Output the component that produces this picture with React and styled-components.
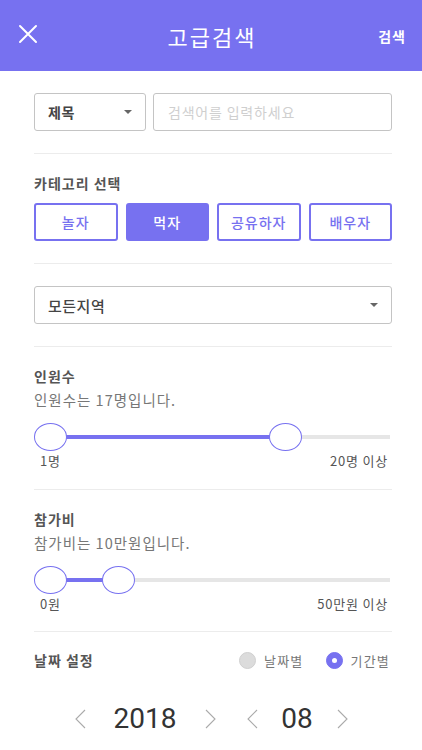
import React, { useState } from "react";
import styled, { createGlobalStyle } from "styled-components";

const PURPLE = "#7771f0";

const GlobalStyle = createGlobalStyle`
  * { box-sizing: border-box; }
  body {
    margin: 0;
    background: #fff;
    font-family: "Noto Sans CJK KR", "Noto Sans", sans-serif;
    color: #444;
  }
`;

const Page = styled.div`
  width: 422px;
  height: 750px;
  overflow: hidden;
  background: #fff;
`;

const Header = styled.header`
  height: 71px;
  background: ${PURPLE};
  display: grid;
  grid-template-columns: 80px 1fr 80px;
  align-items: center;
  color: #fff;
  padding: 0 16px 0 18px;
`;

const CloseButton = styled.button`
  background: none;
  border: none;
  padding: 0;
  width: 24px;
  height: 24px;
  display: flex;
  color: #fff;
`;

const Title = styled.h1`
  margin: 0;
  text-align: center;
  font-size: 22px;
  font-weight: 400;
  letter-spacing: 2px;
`;

const HeaderAction = styled.span`
  justify-self: end;
  font-size: 14px;
  font-weight: 700;
  letter-spacing: 1px;
`;

const Body = styled.div`
  padding: 0 30px 0 34px;
`;

const Section = styled.section`
  padding: ${(p) => p.$pad || "21px 0 22px"};
  border-bottom: ${(p) => (p.$last ? "none" : "1px solid #ececec")};
`;

const Row = styled.div`
  display: flex;
  gap: 7px;
`;

const SelectBox = styled.div`
  width: ${(p) => p.$width || "auto"};
  flex: ${(p) => (p.$grow ? 1 : "none")};
  height: 38px;
  border: 1px solid #c4c4c4;
  border-radius: 3px;
  display: flex;
  align-items: center;
  justify-content: space-between;
  padding: 0 13px 0 13px;
  font-size: ${(p) => p.$size || "14px"};
  font-weight: ${(p) => p.$weight || 700};
  letter-spacing: 0.5px;
  color: #444;
`;

const Caret = styled.span`
  width: 0;
  height: 0;
  border-left: 4px solid transparent;
  border-right: 4px solid transparent;
  border-top: 4px solid #666;
`;

const Input = styled.div`
  flex: 1;
  height: 38px;
  border: 1px solid #c4c4c4;
  border-radius: 3px;
  display: flex;
  align-items: center;
  padding: 0 14px;
  font-size: 14px;
  letter-spacing: 0.8px;
  color: #cfcfcf;
`;

const Label = styled.h2`
  margin: 0;
  font-size: 14px;
  font-weight: 700;
  color: #555;
  line-height: 20px;
  letter-spacing: 1px;
`;

const Sub = styled.p`
  margin: 4px 0 0;
  font-size: 14.5px;
  color: #777;
  line-height: 20px;
  letter-spacing: 1px;
`;

const CategoryGrid = styled.div`
  display: grid;
  grid-template-columns: repeat(4, 1fr);
  gap: 8px;
  margin-top: 10px;
`;

const CategoryButton = styled.button`
  height: 38px;
  border: 2px solid ${PURPLE};
  border-radius: 3px;
  background: ${(p) => (p.$active ? PURPLE : "#fff")};
  color: ${(p) => (p.$active ? "#fff" : PURPLE)};
  font-family: inherit;
  font-size: 14px;
  font-weight: 500;
  letter-spacing: 1px;
`;

const SliderWrap = styled.div`
  position: relative;
  height: 28px;
  margin: 13px 2px 0 0;
`;

const Track = styled.div`
  position: absolute;
  left: 0;
  right: 0;
  top: 12px;
  height: 4px;
  background: #e6e6e6;
`;

const Fill = styled.div`
  position: absolute;
  top: 12px;
  height: 4px;
  background: ${PURPLE};
`;

const Thumb = styled.div`
  position: absolute;
  top: 0;
  width: 33px;
  height: 28px;
  margin-left: -16px;
  border-radius: 50%;
  border: 1.5px solid ${PURPLE};
  background: #fff;
`;

const Ends = styled.div`
  display: flex;
  justify-content: space-between;
  font-size: 13px;
  color: #555;
  padding: 0 4px 0 6px;
  line-height: 20px;
  letter-spacing: 0.8px;
`;

const DateHeader = styled.div`
  display: flex;
  align-items: center;
  justify-content: space-between;
  height: 20px;
`;

const Radios = styled.div`
  display: flex;
  gap: 22px;
  margin-right: 2px;
`;

const Radio = styled.label`
  display: flex;
  align-items: center;
  gap: 8px;
  font-size: 13px;
  color: #777;
  letter-spacing: 1.2px;
`;

const Dot = styled.span`
  width: 17px;
  height: 17px;
  border-radius: 50%;
  background: ${(p) => (p.$on ? PURPLE : "#dcdcdc")};
  border: 1px solid ${(p) => (p.$on ? PURPLE : "#d0d0d0")};
  display: flex;
  align-items: center;
  justify-content: center;
  &::after {
    content: "";
    display: ${(p) => (p.$on ? "block" : "none")};
    width: 5px;
    height: 5px;
    border-radius: 50%;
    background: #fff;
  }
`;

const Stepper = styled.div`
  display: flex;
  align-items: center;
  height: 34px;
  margin-top: 32px;
  padding-left: 30px;
`;

const Value = styled.span`
  font-family: Roboto, "Noto Sans", sans-serif;
  font-size: 28px;
  line-height: 34px;
  color: #333;
  width: ${(p) => p.$w};
  text-align: center;
`;

const Chevron = styled.span`
  display: flex;
  width: 32px;
  justify-content: center;
  margin-left: ${(p) => p.$gap || "0"};
`;

const XIcon = () => (
  <svg width="20" height="20" viewBox="0 0 20 20" fill="none">
    <path d="M2 2L18 18M18 2L2 18" stroke="#fff" strokeWidth="2" strokeLinecap="round" />
  </svg>
);

const ChevronIcon = ({ dir }) => (
  <svg width="11" height="20" viewBox="0 0 11 20" fill="none">
    <path
      d={dir === "left" ? "M10 1L1 10L10 19" : "M1 1L10 10L1 19"}
      stroke="#aaa"
      strokeWidth="1.1"
    />
  </svg>
);

/* thumb centres are in px from the left of the track */
const RangeSlider = ({ from, to, startLabel, endLabel }) => (
  <>
    <SliderWrap>
      <Track />
      <Fill style={{ left: from, width: to - from }} />
      <Thumb style={{ left: from }} />
      <Thumb style={{ left: to }} />
    </SliderWrap>
    <Ends>
      <span>{startLabel}</span>
      <span>{endLabel}</span>
    </Ends>
  </>
);

const categories = ["놀자", "먹자", "공유하자", "배우자"];

export default function App() {
  const [active, setActive] = useState(1);
  return (
    <Page>
      <GlobalStyle />
      <Header>
        <CloseButton aria-label="닫기">
          <XIcon />
        </CloseButton>
        <Title>고급검색</Title>
        <HeaderAction>검색</HeaderAction>
      </Header>
      <Body>
        <Section $pad="22px 0 22px">
          <Row>
            <SelectBox $width="112px">
              제목
              <Caret />
            </SelectBox>
            <Input>검색어를 입력하세요</Input>
          </Row>
        </Section>
        <Section $pad="19px 0 22px">
          <Label>카테고리 선택</Label>
          <CategoryGrid>
            {categories.map((c, i) => (
              <CategoryButton key={c} $active={i === active} onClick={() => setActive(i)}>
                {c}
              </CategoryButton>
            ))}
          </CategoryGrid>
        </Section>
        <Section $pad="22px 0 22px">
          <SelectBox $grow $size="15px" $weight={500}>
            모든지역
            <Caret />
          </SelectBox>
        </Section>
        <Section $pad="19px 0 18px">
          <Label>인원수</Label>
          <Sub>인원수는 17명입니다.</Sub>
          <RangeSlider from={16} to={251} startLabel="1명" endLabel="20명 이상" />
        </Section>
        <Section $pad="19px 0 17px">
          <Label>참가비</Label>
          <Sub>참가비는 10만원입니다.</Sub>
          <RangeSlider from={16} to={84} startLabel="0원" endLabel="50만원 이상" />
        </Section>
        <Section $last $pad="18px 0 0">
          <DateHeader>
            <Label>날짜 설정</Label>
            <Radios>
              <Radio>
                <Dot />
                날짜별
              </Radio>
              <Radio>
                <Dot $on />
                기간별
              </Radio>
            </Radios>
          </DateHeader>
          <Stepper>
            <Chevron><ChevronIcon dir="left" /></Chevron>
            <Value $w="98px">2018</Value>
            <Chevron><ChevronIcon dir="right" /></Chevron>
            <Chevron $gap="10px"><ChevronIcon dir="left" /></Chevron>
            <Value $w="58px">08</Value>
            <Chevron><ChevronIcon dir="right" /></Chevron>
          </Stepper>
        </Section>
      </Body>
    </Page>
  );
}
